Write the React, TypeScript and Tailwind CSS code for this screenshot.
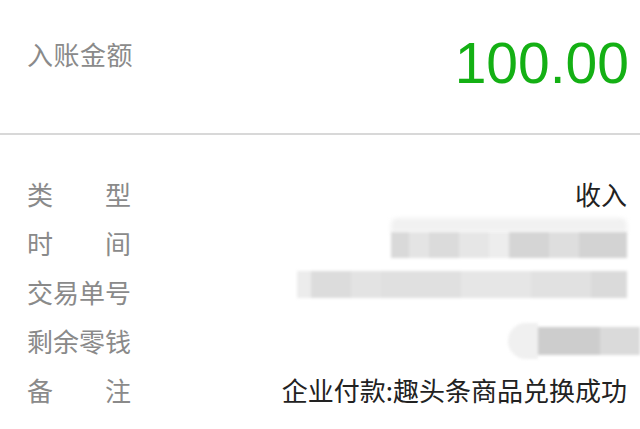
import React from 'react';

const cjk = { fontFamily: '"Noto Sans CJK SC", "Noto Sans", sans-serif' };

type Seg = { w: number; c: string };

const Smudge: React.FC<{ segs: Seg[]; h: number; className?: string }> = ({ segs, h, className = '' }) => (
  <div className={`flex blur-[1.5px] ${className}`} style={{ height: h }}>
    {segs.map((s, i) => (
      <div key={i} style={{ width: s.w, background: s.c }} />
    ))}
  </div>
);

const Label: React.FC<{ text: string }> = ({ text }) => {
  const chars = text.split('');
  return (
    <div className="w-[104px] flex justify-between text-[#8a8a8a]">
      {chars.map((ch, i) => (
        <span key={i}>{ch}</span>
      ))}
    </div>
  );
};

export default function App() {
  return (
    <div className="w-[640px] h-[429px] bg-white overflow-hidden" style={cjk}>
      {/* amount header */}
      <div className="h-[133px] pl-[27px] pr-[11px] flex justify-between items-start">
        <div className="pt-[38px] text-[26px] leading-[32px] text-[#8a8a8a] tracking-[0.5px]">入账金额</div>
        <div
          className="pt-[31px] text-[57px] leading-[64px] text-[#14b014]"
          style={{ fontFamily: '"Liberation Sans", Arial, sans-serif' }}
        >
          100.00
        </div>
      </div>
      <div className="h-[2px] bg-[#d8d8d8]" />

      {/* detail rows */}
      <div className="pt-[34px] pl-[27px] pr-[13px] text-[26px]">
        <div className="h-[49px] flex items-center justify-between">
          <Label text="类型" />
          <span className="text-[#222]">收入</span>
        </div>

        <div className="h-[49px] flex items-center justify-between">
          <Label text="时间" />
          <div className="flex flex-col mt-[-10px]">
            <div className="h-[14px] w-[236px] bg-[#f1f1f1] blur-[2px] rounded-t-[6px]" />
            <Smudge
              h={26}
              segs={[
                { w: 18, c: '#d9d9d9' },
                { w: 20, c: '#e4e4e4' },
                { w: 30, c: '#dbdbdb' },
                { w: 30, c: '#e6e6e6' },
                { w: 20, c: '#ededed' },
                { w: 40, c: '#d5d5d5' },
                { w: 30, c: '#dedede' },
                { w: 48, c: '#d3d3d3' },
              ]}
            />
          </div>
        </div>

        <div className="h-[49px] flex items-center justify-between">
          <Label text="交易单号" />
          <Smudge
            h={27}
            className="mt-[-14px]"
            segs={[
              { w: 14, c: '#ececec' },
              { w: 40, c: '#dcdcdc' },
              { w: 30, c: '#e3e3e3' },
              { w: 80, c: '#e0e0e0' },
              { w: 70, c: '#e6e6e6' },
              { w: 60, c: '#e1e1e1' },
              { w: 36, c: '#dadada' },
            ]}
          />
        </div>

        <div className="h-[49px] flex items-center justify-between">
          <Label text="剩余零钱" />
          <div className="flex items-center mr-[-13px] blur-[1.5px]">
            <div className="w-[30px] h-[36px] bg-[#f0f0f0] rounded-l-full" />
            <div className="w-[62px] h-[28px] bg-[#cdcdcd]" />
            <div className="w-[40px] h-[28px] bg-[#dadada]" />
          </div>
        </div>

        <div className="h-[49px] flex items-center justify-between">
          <Label text="备注" />
          <span className="text-[#222] text-[26px]">企业付款:趣头条商品兑换成功</span>
        </div>
      </div>
    </div>
  );
}
